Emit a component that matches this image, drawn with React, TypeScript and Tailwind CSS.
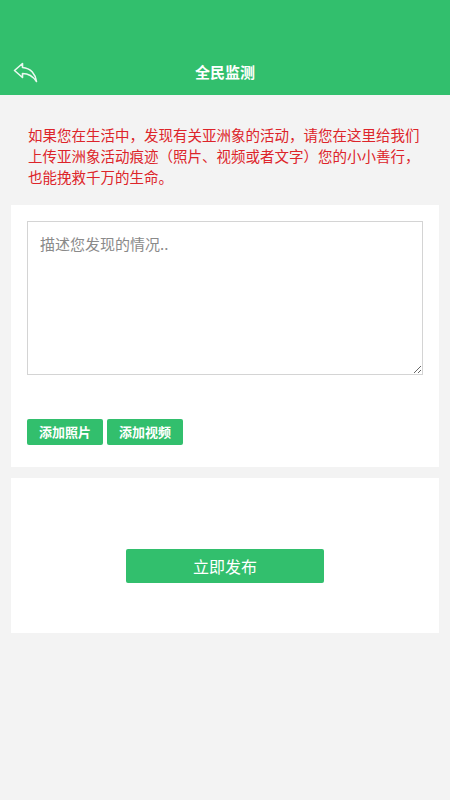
import { useState } from "react";

const GREEN = "bg-[#32bf6d]";

function BackIcon() {
  return (
    <svg width="25" height="21" viewBox="0 0 25 21" fill="none" className="opacity-90">
      <path
        d="M9.5 1.5 L1.5 8.5 L9.5 15.5 L9.5 11.5 C15.5 11.5 19.5 13.5 23.5 19.5 C22.5 12.5 18 6 9.5 5.5 Z"
        stroke="white"
        strokeWidth="1.6"
        strokeLinejoin="round"
      />
    </svg>
  );
}

export default function App() {
  const [text, setText] = useState("");

  return (
    <div
      className="min-h-[800px] bg-[#f3f3f3]"
      style={{ fontFamily: '"Noto Sans CJK SC", "Noto Sans", sans-serif' }}
    >
      {/* header */}
      <header className={`${GREEN} pt-[50px] h-[95px]`}>
        <div className="relative h-[45px] flex items-center justify-center">
          <button className="absolute left-[13px] top-[12px]">
            <BackIcon />
          </button>
          <h1 className="text-white text-[15px] font-bold">全民监测</h1>
        </div>
      </header>

      <p className="mt-[29px] pl-[28px] pr-[22px] text-[14.5px] leading-[21px] text-[#dd242a]">
        如果您在生活中，发现有关亚洲象的活动，请您在这里给我们上传亚洲象活动痕迹（照片、视频或者文字）您的小小善行，也能挽救千万的生命。
      </p>

      <section className="mx-[11px] mt-[18px] bg-white px-[16px] pt-[16px] pb-[22px]">
        <textarea
          value={text}
          onChange={(e) => setText(e.target.value)}
          placeholder="描述您发现的情况.."
          className="block w-full h-[154px] border border-[#d4d4d4] px-[12px] py-[11px] text-[15px] leading-[22px] text-[#333] placeholder:text-[#8a8a8a] outline-none"
        />
        <div className="mt-[44px] flex gap-[4px]">
          <button className={`${GREEN} w-[76px] h-[26px] rounded-[2px] text-white text-[13px] font-bold`}>
            添加照片
          </button>
          <button className={`${GREEN} w-[76px] h-[26px] rounded-[2px] text-white text-[13px] font-bold`}>
            添加视频
          </button>
        </div>
      </section>

      <section className="mx-[11px] mt-[11px] bg-white h-[155px] pt-[71px] flex justify-center">
        <button className={`${GREEN} w-[198px] h-[34px] rounded-[2px] text-white text-[16px]`}>
          立即发布
        </button>
      </section>
    </div>
  );
}
